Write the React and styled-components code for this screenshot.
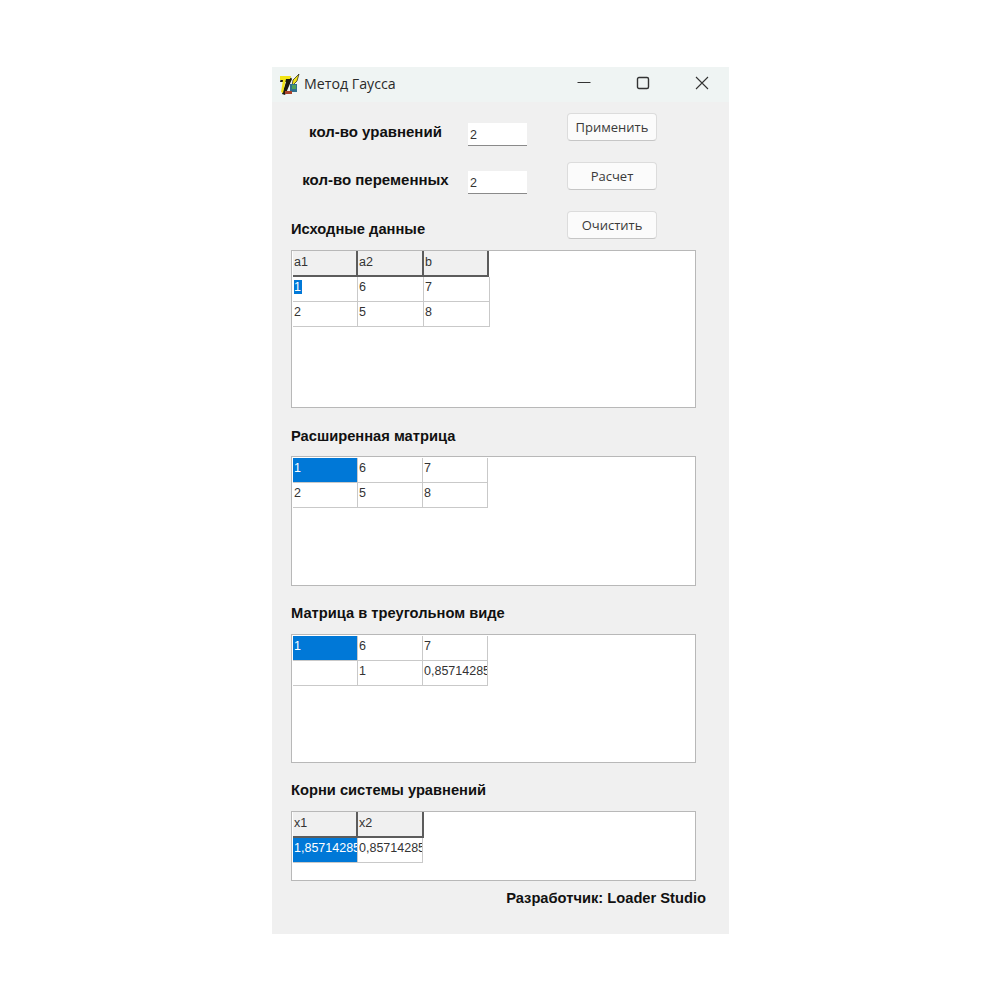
import React from 'react';
import styled, { createGlobalStyle } from 'styled-components';

const GlobalStyle = createGlobalStyle`
  html, body {
    margin: 0;
    padding: 0;
    background: #fff;
  }
  body {
    font-family: "Liberation Sans", Arial, sans-serif;
  }
`;

const Page = styled.div`
  width: 1000px;
  height: 1000px;
  padding: 67px 0 0 272px;
  box-sizing: border-box;
`;

const Window = styled.div`
  width: 457px;
  height: 867px;
  background: #f0f0f0;
  display: flex;
  flex-direction: column;
`;

const TitleBar = styled.div`
  height: 35px;
  flex: none;
  background: #eff4f3;
  display: flex;
  align-items: center;
  padding-left: 7px;
`;

const TitleText = styled.span`
  font-family: "Open Sans", sans-serif;
  font-size: 14.2px;
  line-height: 33px;
  height: 35px;
  color: #2a2a2a;
  margin-left: 4px;
  flex: 1;
`;

const WindowButton = styled.div`
  width: 59px;
  height: 35px;
  box-sizing: border-box;
  padding: 0 0 4px 5px;
  display: flex;
  align-items: center;
  justify-content: center;
`;

const Content = styled.div`
  flex: 1;
  padding: 11px 22px 0 19px;
  display: flex;
  flex-direction: column;
  align-items: flex-start;
`;

const TopPanel = styled.div`
  width: 100%;
  height: 137px;
  display: flex;
  justify-content: space-between;
  padding-right: 50px;
  box-sizing: border-box;
`;

const Fields = styled.div`
  display: flex;
  flex-direction: column;
`;

const FieldRow = styled.div`
  height: 23px;
  margin-top: ${p => p.$top}px;
  display: flex;
  align-items: center;
`;

const FieldLabel = styled.label`
  width: 177px;
  padding-right: 8px;
  box-sizing: border-box;
  text-align: center;
  white-space: nowrap;
  font-size: 15px;
  font-weight: bold;
  color: #111;
  position: relative;
  top: -3px;
`;

const Input = styled.input`
  width: 59px;
  height: 23px;
  box-sizing: border-box;
  border: none;
  border-bottom: 1px solid #8a8a8a;
  background: #fff;
  padding: 2px 0 0 2px;
  font-family: "Liberation Sans", Arial, sans-serif;
  font-size: 12.5px;
  color: #333;
  outline: none;
`;

const Buttons = styled.div`
  display: flex;
  flex-direction: column;
  gap: 21px;
`;

const Button = styled.button`
  width: 90px;
  height: 28px;
  background: #fbfbfb;
  border: 1px solid #dcdcdc;
  border-bottom-color: #c6c6c6;
  border-radius: 4px;
  font-family: "Open Sans", sans-serif;
  font-size: 13px;
  color: #3a3a3a;
  padding: 0;
`;

const SectionTitle = styled.h3`
  margin: ${p => p.$top}px 0 0;
  font-size: 14.7px;
  line-height: 16px;
  font-weight: bold;
  color: #111;
  white-space: nowrap;
`;

const GridBox = styled.div`
  width: 405px;
  height: ${p => p.$height}px;
  margin-top: ${p => p.$top}px;
  background: #fff;
  border: 1px solid #b8b8b8;
  box-sizing: border-box;
  padding: ${p => (p.$headless ? 1 : 0)}px 0 0 1px;
`;

const Row = styled.div`
  display: flex;
`;

const Cell = styled.div`
  width: ${p => p.$w || 65}px;
  height: 25px;
  box-sizing: border-box;
  flex: none;
  overflow: hidden;
  white-space: nowrap;
  padding: 3px 0 0 1px;
  font-size: 12.5px;
  line-height: 15px;
  color: ${p => (p.$selected ? '#fff' : '#333')};
  background: ${p => (p.$selected ? '#0078d7' : '#fff')};
  border-right: 1px solid #c9c9c9;
  border-bottom: 1px solid #c9c9c9;
`;

const HeaderCell = styled.div`
  width: ${p => p.$w || 66}px;
  height: 26px;
  box-sizing: border-box;
  flex: none;
  padding: 4px 0 0 1px;
  font-size: 12.5px;
  line-height: 15px;
  color: #333;
  background: #f0f0f0;
  border-right: 2px solid #5c5c5c;
  border-bottom: 2px solid #5c5c5c;
`;

const Highlight = styled.span`
  background: #0078d7;
  color: #fff;
  padding-right: 1px;
`;

const Footer = styled.div`
  align-self: flex-end;
  margin: 9px 1px 0 0;
  font-size: 14.7px;
  line-height: 16px;
  font-weight: bold;
  color: #111;
`;

const AppIcon = () => (
  <svg width="21" height="23" viewBox="0 0 21 23">
    <path d="M2 5h10l-1-2 2 3-6 14-1 2-3-1 4-12H1z" fill="#1c1a10" />
    <path d="M1 3l11 0-1 3-4 0-3 14-2-1 2-12-3 0z" fill="#f2e416" />
    <path d="M14 7l6-6-2 7-5 5z" fill="#f2e416" stroke="#1c1a10" strokeWidth="0.7" />
    <rect x="11" y="11" width="7" height="8" fill="#2f6f8f" />
    <rect x="13" y="12" width="4" height="4" fill="#4fa05a" />
    <rect x="6" y="18" width="7" height="3" fill="#a8432c" />
  </svg>
);

const MinimizeIcon = () => (
  <svg width="14" height="14" viewBox="0 0 14 14">
    <path d="M0.5 6.5h13" stroke="#333" fill="none" />
  </svg>
);

const MaximizeIcon = () => (
  <svg width="14" height="14" viewBox="0 0 14 14">
    <rect x="1.5" y="1.5" width="11" height="11" rx="1.5" stroke="#333" strokeWidth="1.4" fill="none" />
  </svg>
);

const CloseIcon = () => (
  <svg width="14" height="14" viewBox="0 0 14 14">
    <path d="M1 1l12 12M13 1L1 13" stroke="#333" strokeWidth="1.1" fill="none" />
  </svg>
);

const App = () => {
  return (
    <Page>
      <GlobalStyle />
      <Window>
        <TitleBar>
          <AppIcon />
          <TitleText>Метод Гаусса</TitleText>
          <WindowButton><MinimizeIcon /></WindowButton>
          <WindowButton><MaximizeIcon /></WindowButton>
          <WindowButton><CloseIcon /></WindowButton>
        </TitleBar>
        <Content>
          <TopPanel>
            <Fields>
              <FieldRow $top={10}>
                <FieldLabel>кол-во уравнений</FieldLabel>
                <Input defaultValue="2" />
              </FieldRow>
              <FieldRow $top={25}>
                <FieldLabel>кол-во переменных</FieldLabel>
                <Input defaultValue="2" />
              </FieldRow>
              <SectionTitle $top={27}>Исходные данные</SectionTitle>
            </Fields>
            <Buttons>
              <Button>Применить</Button>
              <Button>Расчет</Button>
              <Button>Очистить</Button>
            </Buttons>
          </TopPanel>

          <GridBox $height={158} $top={0}>
            <Row>
              <HeaderCell $w={65}>a1</HeaderCell>
              <HeaderCell>a2</HeaderCell>
              <HeaderCell $w={65}>b</HeaderCell>
            </Row>
            <Row>
              <Cell><Highlight>1</Highlight></Cell>
              <Cell $w={66}>6</Cell>
              <Cell $w={66}>7</Cell>
            </Row>
            <Row>
              <Cell>2</Cell>
              <Cell $w={66}>5</Cell>
              <Cell $w={66}>8</Cell>
            </Row>
          </GridBox>

          <SectionTitle $top={20}>Расширенная матрица</SectionTitle>
          <GridBox $headless $height={130} $top={12}>
            <Row>
              <Cell $selected>1</Cell>
              <Cell>6</Cell>
              <Cell>7</Cell>
            </Row>
            <Row>
              <Cell>2</Cell>
              <Cell>5</Cell>
              <Cell>8</Cell>
            </Row>
          </GridBox>

          <SectionTitle $top={19}>Матрица в треугольном виде</SectionTitle>
          <GridBox $headless $height={129} $top={13}>
            <Row>
              <Cell $selected>1</Cell>
              <Cell>6</Cell>
              <Cell>7</Cell>
            </Row>
            <Row>
              <Cell />
              <Cell>1</Cell>
              <Cell>0,857142857</Cell>
            </Row>
          </GridBox>

          <SectionTitle $top={19}>Корни системы уравнений</SectionTitle>
          <GridBox $height={70} $top={13}>
            <Row>
              <HeaderCell $w={65}>x1</HeaderCell>
              <HeaderCell>x2</HeaderCell>
            </Row>
            <Row>
              <Cell $selected>1,857142857</Cell>
              <Cell>0,857142857</Cell>
            </Row>
          </GridBox>

          <Footer>Разработчик: Loader Studio</Footer>
        </Content>
      </Window>
    </Page>
  );
};

export default App;
